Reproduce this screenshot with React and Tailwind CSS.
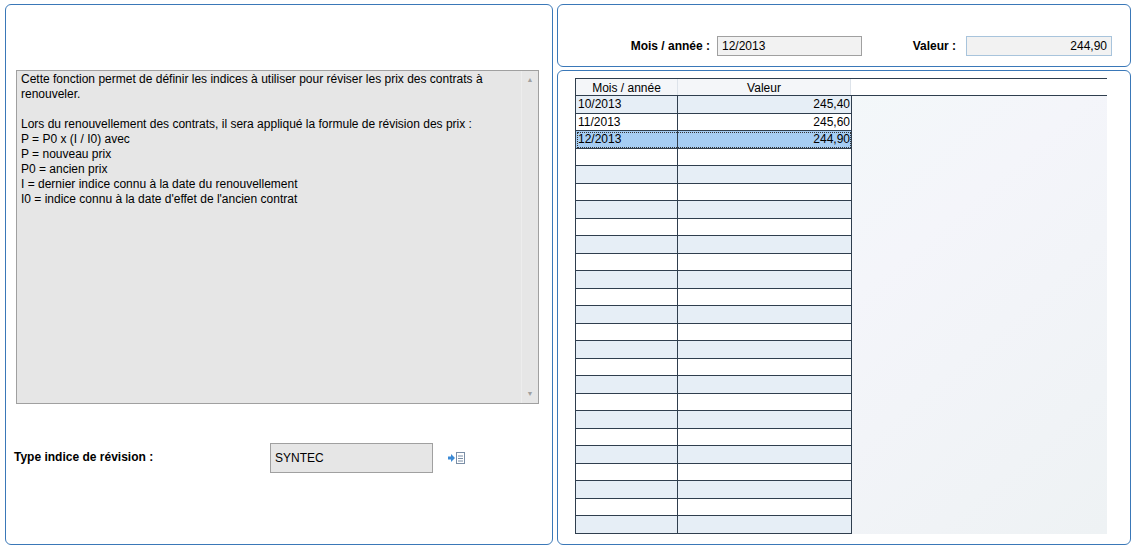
import React from 'react';

const data = [
  ['10/2013', '245,40'],
  ['11/2013', '245,60'],
  ['12/2013', '244,90'],
];

const rows = Array.from({ length: 25 }, (_, i) => data[i] || ['', '']);

const App = () => {
  return (
    <div
      className="w-[1136px] h-[549px] bg-white flex gap-[4px] px-[5px] pt-[4px] pb-[4px] text-[12px] text-black"
      style={{ fontFamily: '"Liberation Sans", Arial, sans-serif' }}
    >
      {/* Left panel */}
      <div className="w-[548px] h-[541px] border border-[#3a78b8] rounded-[6px] flex flex-col">
        <div className="mt-[65px] ml-[10px] w-[523px] h-[334px] border border-[#a0a0a0] bg-[#e6e6e6] flex">
          <div className="flex-1 px-[4px] pt-[1px] leading-[15px]">
            <p>Cette fonction permet de définir les indices à utiliser pour réviser les prix des contrats à renouveler.</p>
            <p className="mt-[15px]">Lors du renouvellement des contrats, il sera appliqué la formule de révision des prix :</p>
            <p>P = P0 x (I / I0) avec</p>
            <p>P = nouveau prix</p>
            <p>P0 = ancien prix</p>
            <p>I = dernier indice connu à la date du renouvellement</p>
            <p>I0 = indice connu à la date d'effet de l'ancien contrat</p>
          </div>
          <div className="w-[17px] border-l border-[#ededed] flex flex-col justify-between items-center py-[4px] text-[7px] text-[#a0a0a0]">
            <span>▲</span>
            <span>▼</span>
          </div>
        </div>
        <div className="mt-[39px] ml-[8px] flex items-center">
          <span className="w-[256px] font-bold -mt-[2px]">Type indice de révision :</span>
          <div className="w-[163px] h-[30px] border border-[#a0a0a0] bg-[#e6e6e6] flex items-center px-[4px]">SYNTEC</div>
          <svg className="ml-[14px] -mt-[1px]" width="20" height="14" viewBox="0 0 20 14">
            <path d="M1 5.5 H4 V3 L8 7 L4 11 V8.5 H1 Z" fill="#3b8ad6" />
            <rect x="9.5" y="1.5" width="8" height="11" fill="#fff" stroke="#7a8ea6" />
            <line x1="11" y1="5" x2="16" y2="5" stroke="#7a8ea6" />
            <line x1="11" y1="7.5" x2="16" y2="7.5" stroke="#7a8ea6" />
            <line x1="11" y1="10" x2="16" y2="10" stroke="#7a8ea6" />
          </svg>
        </div>
      </div>

      {/* Right column */}
      <div className="flex-1 flex flex-col gap-[3px]">
        <div className="h-[63px] border border-[#3a78b8] rounded-[6px] flex items-center pt-[21px]">
          <span className="w-[152px] text-right font-bold">Mois / année :</span>
          <div className="ml-[7px] w-[145px] h-[20px] border border-[#a0a0a0] bg-[#f2f2f2] px-[4px] flex items-center">12/2013</div>
          <span className="w-[94px] text-right font-bold">Valeur :</span>
          <div className="ml-[10px] w-[146px] h-[20px] border border-[#a8c4dc] bg-[#f2f2f2] px-[4px] flex items-center justify-end">244,90</div>
        </div>
        <div className="flex-1 border border-[#3a78b8] rounded-[6px] pt-[7px] pl-[17px]">
          <div className="w-[532px] h-[456px] border-l border-t border-[#2f3e4e] flex flex-col bg-gradient-to-br from-[#f2fbf9] via-[#f4f5fa] to-[#eef2f4]">
            <div className="h-[17px] flex bg-[#f4f6f9] border-b border-[#2f3e4e]">
              <div className="w-[102px] text-center border-r border-[#dde3ea]">Mois / année</div>
              <div className="w-[173px] text-center border-r border-[#dde3ea]">Valeur</div>
              <div className="flex-1 bg-white" />
            </div>
            {rows.map((r, i) => {
              const sel = i === 2;
              const bg = sel ? 'bg-[#a6cdf3]' : i % 2 === 0 ? 'bg-[#e6eef6]' : 'bg-white';
              return (
                <div key={i} className={`w-[276px] h-[17.5px] flex border-b border-r border-[#2f3e4e] leading-[17px] ${bg} ${sel ? 'outline outline-1 outline-dotted outline-[#333] -outline-offset-2' : ''}`}>
                  <div className="w-[102px] border-r border-[#2f3e4e] px-[2px]">{r[0]}</div>
                  <div className="flex-1 text-right px-[1px]">{r[1]}</div>
                </div>
              );
            })}
          </div>
        </div>
      </div>
    </div>
  );
};

export default App;
